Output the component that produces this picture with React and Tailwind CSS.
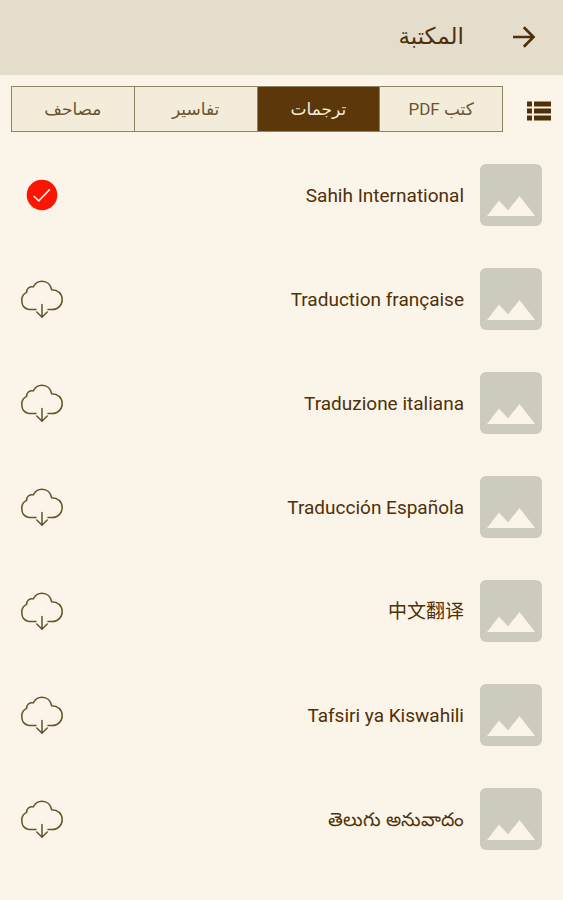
import { useState } from 'react';

const tabs = [
  { id: 'pdf', label: 'كتب PDF' },
  { id: 'translations', label: 'ترجمات' },
  { id: 'tafsir', label: 'تفاسير' },
  { id: 'mushaf', label: 'مصاحف' },
];

const books = [
  { id: 'en', title: 'Sahih International', downloaded: true },
  { id: 'fr', title: 'Traduction française' },
  { id: 'it', title: 'Traduzione italiana' },
  { id: 'es', title: 'Traducción Española' },
  { id: 'zh', title: '中文翻译' },
  { id: 'sw', title: 'Tafsiri ya Kiswahili' },
  { id: 'te', title: 'తెలుగు అనువాదం' },
];

function ArrowIcon() {
  return (
    <svg width="24" height="24" viewBox="0 0 24 24" fill="none" stroke="currentColor" strokeWidth="2.7">
      <path d="M1 11H21.5M11.8 1.3L21.5 11L11.8 20.7" />
    </svg>
  );
}

function ListIcon() {
  return (
    <svg width="24" height="20" viewBox="0 0 24 20" fill="currentColor">
      <path d="M0 0.5h5v5H0zM7 0.5h17v5H7zM0 7.5h5v5H0zM7 7.5h17v5H7zM0 14.5h5v5H0zM7 14.5h17v5H7z" />
    </svg>
  );
}

function CloudDownloadIcon() {
  return (
    <svg width="42" height="38" viewBox="0 0 42 38" fill="none" stroke="#64522a" strokeWidth="1.5" strokeLinecap="round">
      <path d="M15 29.5H8C3.8 28.8 0.8 25.5 0.8 20.5C0.8 16.2 3 13.5 5.6 12.4C5.3 8.8 8.5 6 12.3 6.8C14 3.4 17 1.2 21 1.2C26 1.2 29.8 4.6 30.6 9.7C36.6 9.6 41.2 13.6 41.2 19.4C41.2 25.2 37 29.5 31.5 29.5H27" />
      <path d="M21 24.5V37M15.8 32L21 37.2L26.2 32" />
    </svg>
  );
}

function CheckIcon() {
  return (
    <svg width="32" height="32" viewBox="0 0 32 32" fill="none">
      <circle cx="16" cy="16" r="15.3" fill="#fa1505" />
      <path d="M7.6 17L12.8 21.8L23.8 10.4" stroke="#fdeee0" strokeWidth="1.6" />
    </svg>
  );
}

function Cover() {
  return (
    <svg className="shrink-0" width="62" height="62" viewBox="0 0 62 62">
      <rect width="62" height="62" rx="6" fill="#cdcbbe" />
      <path d="M7 52L19 36.5L28 46.5L39.5 32L55 52Z" fill="#fbf4e8" />
    </svg>
  );
}

export default function App() {
  const [activeTab, setActiveTab] = useState('translations');

  return (
    <div
      dir="rtl"
      className="min-h-screen bg-[#fbf4e8] text-[#4f3008] font-[Roboto,'Noto_Sans','Noto_Sans_CJK_SC','DejaVu_Sans',sans-serif]"
    >
      {/* Top bar */}
      <header className="flex items-center gap-12 h-[75px] px-[27px] bg-[#e5ddcc]">
        <button type="button" aria-label="رجوع">
          <ArrowIcon />
        </button>
        <h1 className="text-[23px]">المكتبة</h1>
      </header>

      {/* Tabs */}
      <div className="flex items-center gap-6 pt-[11px] pr-3 pl-[11px]">
        <button type="button" aria-label="عرض القائمة" className="pt-1">
          <ListIcon />
        </button>
        <div role="tablist" className="flex flex-1 h-[46px] border border-[#8f8462] divide-x divide-[#8f8462]">
          {tabs.map(({ id, label }) => (
            <button
              key={id}
              type="button"
              role="tab"
              aria-selected={activeTab === id}
              onClick={() => setActiveTab(id)}
              className={`flex-1 pt-0.5 text-[17px] ${
                activeTab === id ? 'bg-[#5c370a] text-[#f3ecda] font-medium' : 'bg-[#f3ecda] text-[#6b5330]'
              }`}
            >
              {label}
            </button>
          ))}
        </div>
      </div>

      {/* Books */}
      <ul className="pt-[11px] px-[21px]">
        {books.map(({ id, title, downloaded }) => (
          <li key={id} className="flex items-center gap-4 h-[104px]">
            <Cover />
            <span className="flex-1 pt-0.5 text-[19px]" lang={id}>
              {title}
            </span>
            <button
              type="button"
              aria-label={downloaded ? `${title} ✓` : `تنزيل ${title}`}
              className="flex justify-center w-[42px]"
            >
              {downloaded ? <CheckIcon /> : <CloudDownloadIcon />}
            </button>
          </li>
        ))}
      </ul>
    </div>
  );
}
